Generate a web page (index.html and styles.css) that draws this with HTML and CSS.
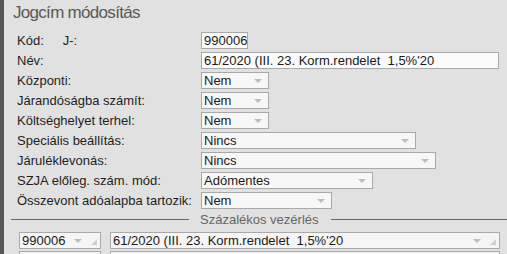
FILE: index.html
```html
<!DOCTYPE html>
<html lang="hu">
<head>
    <meta charset="UTF-8">
    <meta name="viewport" content="width=device-width, initial-scale=1.0">
    <title>Jogcím módosítás</title>
<link rel="stylesheet" href="styles.css">
</head>
<body>
    <div id="panel">
        <h1 class="title">Jogcím módosítás</h1>

        <div class="form">
            <div class="row row-kod">
                <span class="label">Kód:<span class="sub">J-:</span></span>
                <div class="field w-kod">990006</div>
            </div>
            <div class="row row-nev">
                <span class="label">Név:</span>
                <div class="field w-nev">61/2020 (III. 23. Korm.rendelet &nbsp;1,5%'20</div>
            </div>
            <div class="row">
                <span class="label">Központi:</span>
                <div class="select w-nem">Nem<span class="arrow"></span></div>
            </div>
            <div class="row">
                <span class="label">Járandóságba számít:</span>
                <div class="select w-nem">Nem<span class="arrow"></span></div>
            </div>
            <div class="row">
                <span class="label">Költséghelyet terhel:</span>
                <div class="select w-nem">Nem<span class="arrow"></span></div>
            </div>
            <div class="row">
                <span class="label">Speciális beállítás:</span>
                <div class="select w-spec">Nincs<span class="arrow"></span></div>
            </div>
            <div class="row">
                <span class="label">Járuléklevonás:</span>
                <div class="select w-jar">Nincs<span class="arrow"></span></div>
            </div>
            <div class="row">
                <span class="label">SZJA előleg. szám. mód:</span>
                <div class="select w-szja">Adómentes<span class="arrow"></span></div>
            </div>
            <div class="row">
                <span class="label">Összevont adóalapba tartozik:</span>
                <div class="select w-ossz">Nem<span class="arrow"></span></div>
            </div>
        </div>

        <!-- Százalékos vezérlés -->
        <div class="divider"><span>Százalékos vezérlés</span></div>

        <div class="combo-row first">
            <div class="combo w-code">990006<span class="arrow"></span><span class="grip"></span></div>
            <div class="combo w-name">61/2020 (III. 23. Korm.rendelet &nbsp;1,5%'20<span class="arrow"></span><span class="grip"></span></div>
        </div>
        <div class="combo-row">
            <div class="combo w-code"></div>
            <div class="combo w-name"></div>
        </div>
    </div>
</body>
</html>
```

FILE: styles.css
```css
 body {
     font-family: "Liberation Sans", Arial, sans-serif;
     margin: 0;
     padding: 0;
     background-color: #e1e1e1;
     overflow: hidden;
 }

 #panel {
     height: 254px;
     overflow: hidden;
     border-left: 4px solid #575757;
     padding-left: 7px;
     box-sizing: border-box;
 }

 .title {
     margin: 0;
     padding: 3px 0 0 2px;
     height: 29px;
     box-sizing: border-box;
     font-size: 17px;
     letter-spacing: -0.7px;
     font-weight: normal;
     color: #595959;
 }

 .form {
     padding-left: 6px;
 }

 .row {
     display: flex;
     align-items: center;
     height: 20px;
     font-size: 13px;
     color: #1e1e1e;
 }

 .row-kod {
     height: 21px;
     margin-top: 1px;
 }

 .row-nev {
     height: 19px;
 }

 .label {
     width: 184px;
     flex-shrink: 0;
 }

 .sub {
     margin-left: 19px;
 }

 .field, .select, .combo {
     height: 17px;
     box-sizing: border-box;
     border: 1px solid #a9a9a9;
     background-color: #f7f7f7;
     padding: 0 2px;
     line-height: 15px;
     font-size: 13px;
     color: #1a1a1a;
     white-space: nowrap;
     overflow: hidden;
     position: relative;
     flex-shrink: 0;
 }

 .field {
     background-color: #fbfbfb;
 }

 .w-kod { width: 47px; }
 .w-nev { width: 298px; }
 .w-nem { width: 68px; }
 .w-spec { width: 215px; }
 .w-jar { width: 235px; }
 .w-szja { width: 172px; }
 .w-ossz { width: 131px; }

 .arrow {
     position: absolute;
     right: 6px;
     top: 6px;
     width: 0;
     height: 0;
     border-left: 4px solid transparent;
     border-right: 4px solid transparent;
     border-top: 4px solid #bdbdbd;
 }

 .divider {
     display: flex;
     align-items: center;
     margin-top: 1px;
     height: 16px;
     font-size: 13px;
     color: #666;
 }

 .divider::before {
     content: "";
     width: 178px;
     border-top: 1px solid #666;
     margin-right: 11px;
 }

 .divider::after {
     content: "";
     flex: 1;
     border-top: 1px solid #666;
     margin-left: 12px;
 }

 .combo-row {
     display: flex;
     gap: 9px;
     padding-left: 8px;
     margin-top: 2px;
 }

 .combo-row.first {
     margin-top: 5px;
 }

 .combo {
     background-color: #f5f5f5;
 }

 .combo .arrow {
     right: 18px;
 }

 .grip {
     position: absolute;
     right: 3px;
     bottom: 3px;
     width: 0;
     height: 0;
     border-left: 6px solid transparent;
     border-bottom: 6px solid #cfcfcf;
 }

 .w-code { width: 82px; }
 .w-name { width: 390px; }
```
